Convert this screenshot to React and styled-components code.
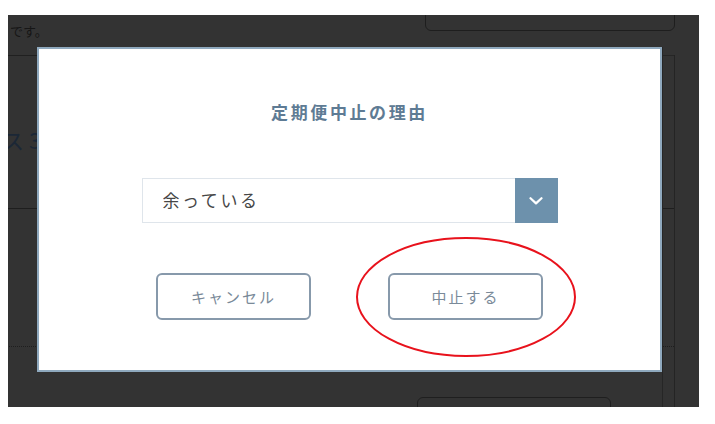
import React, { useState } from 'react';
import styled, { createGlobalStyle } from 'styled-components';

const GlobalStyle = createGlobalStyle`
  html, body {
    margin: 0;
    padding: 0;
    background: #fff;
  }
  body {
    font-family: 'Noto Sans CJK JP', 'Noto Sans', sans-serif;
  }
`;

const reasons = ['余っている', '高い', '効果を感じない', 'その他'];

const App = () => {
  const [reason, setReason] = useState(reasons[0]);

  return (
    <>
      <GlobalStyle />
      <StScreen>
        {/* page behind the dimmed overlay */}
        <StTopBox />
        <StLead>です。</StLead>
        <StCard>
          <StCardRow>
            <StPlan>ス 3ヶ月コース</StPlan>
          </StCardRow>
          <StCardRow dotted />
          <StCardRow dotted />
          <StSideBox />
        </StCard>
        <StBottomBox />

        <StModal>
          <StTitle>定期便中止の理由</StTitle>
          <StSelect>
            <select value={reason} onChange={e => setReason(e.target.value)}>
              {reasons.map(r => (
                <option key={r} value={r}>
                  {r}
                </option>
              ))}
            </select>
            <StArrow>
              <svg width='14' height='8' viewBox='0 0 14 8'>
                <path
                  d='M1.5 1.2 L7 6.4 L12.5 1.2'
                  fill='none'
                  stroke='#fff'
                  strokeWidth='2.2'
                  strokeLinecap='round'
                  strokeLinejoin='round'
                />
              </svg>
            </StArrow>
          </StSelect>
          <StButtons>
            <StButton>キャンセル</StButton>
            <StButton>中止する</StButton>
          </StButtons>
        </StModal>

        <StCircle width='224' height='124' viewBox='0 0 224 124'>
          <ellipse
            cx='112'
            cy='62'
            rx='109'
            ry='59'
            fill='none'
            stroke='#e8121c'
            strokeWidth='2'
          />
        </StCircle>
      </StScreen>
    </>
  );
};

export default App;

const StScreen = styled.div`
  position: relative;
  margin: 15px 0 0 8px;
  width: 691px;
  height: 392px;
  overflow: hidden;
  background: #333;
  display: flex;
  flex-direction: column;
`;

const StTopBox = styled.div`
  position: absolute;
  top: -20px;
  left: 417px;
  width: 248px;
  height: 34px;
  border: 1px solid #1e1e1e;
  border-radius: 6px;
`;

const StLead = styled.p`
  flex-shrink: 0;
  margin: 0;
  padding: 6px 0 0 2px;
  height: 40px;
  box-sizing: border-box;
  font-size: 13px;
  color: #161616;
`;

const StCard = styled.div`
  position: relative;
  margin-left: -10px;
  width: 676px;
  flex: 1;
  min-height: 0;
  border-top: 1px solid #202020;
  border-right: 1px solid #242424;
`;

const StCardRow = styled.div`
  height: ${p => (p.dotted ? '137px' : '152px')};
  border-bottom: 1px ${p => (p.dotted ? 'dotted' : 'solid')} #1e1e1e;
  display: flex;
  align-items: center;
`;

const StPlan = styled.span`
  margin: 14px 0 0 4px;
  font-size: 22px;
  color: #1b2736;
`;

const StSideBox = styled.div`
  position: absolute;
  top: -1px;
  right: 0;
  width: 11px;
  height: 400px;
  border-left: 1px solid #262626;
  border-top: 1px solid #262626;
`;

const StBottomBox = styled.div`
  position: absolute;
  left: 409px;
  top: 382px;
  width: 192px;
  height: 40px;
  border: 1px solid #1f1f1f;
  border-radius: 6px;
`;

const StModal = styled.div`
  position: absolute;
  left: 29px;
  top: 32px;
  width: 625px;
  height: 325px;
  box-sizing: border-box;
  border: 2px solid #8fa9be;
  background: #fff;
  box-shadow: 1px 0 0 #262626;
  display: flex;
  flex-direction: column;
  align-items: center;
  padding-top: 51px;
`;

const StTitle = styled.h2`
  margin: 0;
  height: 24px;
  line-height: 24px;
  font-size: 17px;
  font-weight: 700;
  letter-spacing: 2.6px;
  color: #5e7b94;
`;

const StSelect = styled.div`
  margin-top: 54px;
  width: 416px;
  height: 45px;
  display: flex;
  box-sizing: border-box;
  border: 1px solid #dfe5eb;
  select {
    flex: 1;
    appearance: none;
    border: none;
    outline: none;
    background: #fff;
    padding: 0 0 2px 20px;
    font-family: 'Noto Sans CJK JP', sans-serif;
    font-size: 17px;
    letter-spacing: 2.6px;
    color: #474747;
  }
`;

const StArrow = styled.div`
  width: 43px;
  margin: -1px -1px -1px 0;
  background: #6d91ac;
  display: flex;
  align-items: center;
  justify-content: center;
`;

const StButtons = styled.div`
  margin-top: 50px;
  display: flex;
  gap: 77px;
`;

const StButton = styled.button`
  width: 155px;
  height: 47px;
  box-sizing: border-box;
  border: 2px solid #8799ab;
  border-radius: 6px;
  background: #fff;
  font-family: 'Noto Sans CJK JP', sans-serif;
  font-size: 15px;
  letter-spacing: 2px;
  color: #7a8a99;
  cursor: pointer;
`;

const StCircle = styled.svg`
  position: absolute;
  left: 346px;
  top: 220px;
`;
